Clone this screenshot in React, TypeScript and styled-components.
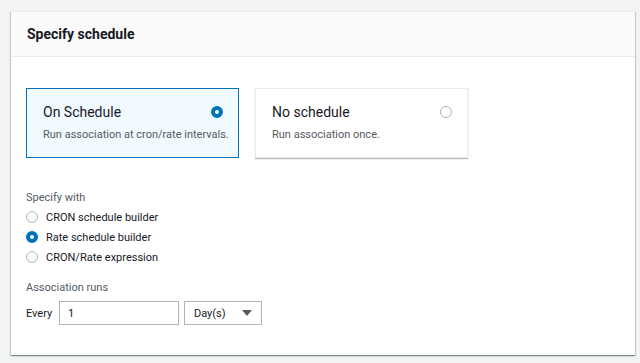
import React from "react";
import styled, { createGlobalStyle } from "styled-components";

const Global = createGlobalStyle`
  html, body { margin: 0; padding: 0; background: #f2f3f3; }
  body { font-family: Roboto, "Noto Sans", Arial, sans-serif; color: #16191f; }
  * { box-sizing: border-box; }
`;

const Page = styled.div`
  padding: 11px 5px 8px 11px;
`;

const Panel = styled.section`
  background: #ffffff;
  width: 624px;
  box-shadow: 0 1px 1px 0 rgba(0, 28, 36, 0.3), 1px 1px 1px 0 rgba(0, 28, 36, 0.15), -1px 1px 1px 0 rgba(0, 28, 36, 0.15);
  border-top: 1px solid #eaeded;
`;

const Header = styled.header`
  height: 45px;
  background: #fafafa;
  border-bottom: 1px solid #eaeded;
  display: flex;
  align-items: center;
  padding: 0 16px;
`;

const Title = styled.h2`
  margin: 0;
  font-size: 14px;
  font-weight: 700;
  color: #16191f;
`;

const Body = styled.div`
  padding: 31px 15px 30px;
`;

const Tiles = styled.div`
  display: flex;
  gap: 16px;
`;

const Tile = styled.div<{ $selected?: boolean }>`
  width: 213px;
  height: 70px;
  padding: 13px 15px 0 16px;
  border: 1px solid ${(p) => (p.$selected ? "#0073bb" : "#eaeded")};
  background: ${(p) => (p.$selected ? "#f1faff" : "#ffffff")};
  box-shadow: ${(p) => (p.$selected ? "none" : "0 1px 1px 0 rgba(0, 28, 36, 0.3)")};
`;

const TileTop = styled.div`
  display: flex;
  align-items: center;
  justify-content: space-between;
  height: 20px;
`;

const TileTitle = styled.div`
  font-size: 14px;
  color: #16191f;
`;

const TileDesc = styled.div`
  margin-top: 6px;
  font-size: 11px;
  color: #545b64;
  white-space: nowrap;
`;

const Radio = styled.span<{ $checked?: boolean }>`
  display: inline-block;
  width: 12px;
  height: 12px;
  border-radius: 50%;
  flex: none;
  border: ${(p) => (p.$checked ? "4px solid #0073bb" : "1px solid #aab7b8")};
  background: #ffffff;
`;

const FieldLabel = styled.div`
  font-size: 11px;
  color: #545b64;
  line-height: 16px;
`;

const Section = styled.div<{ $top: number }>`
  margin-top: ${(p) => p.$top}px;
`;

const Options = styled.div`
  display: flex;
  flex-direction: column;
  margin-top: 1px;
`;

const Option = styled.label`
  display: flex;
  align-items: center;
  gap: 8px;
  height: 20px;
  font-size: 11px;
  color: #16191f;
`;

const Row = styled.div`
  display: flex;
  align-items: center;
  margin-top: 5px;
  font-size: 11px;
`;

const Every = styled.span`
  width: 33px;
  color: #16191f;
`;

const Input = styled.div`
  width: 120px;
  height: 24px;
  border: 1px solid #aab7b8;
  display: flex;
  align-items: center;
  padding-left: 8px;
  font-size: 11px;
  color: #16191f;
  background: #fff;
`;

const Select = styled.div`
  margin-left: 5px;
  width: 78px;
  height: 24px;
  border: 1px solid #aab7b8;
  display: flex;
  align-items: center;
  justify-content: space-between;
  padding: 0 9px 0 9px;
  font-size: 11px;
  color: #16191f;
  background: #fff;
`;

const Caret = styled.span`
  width: 0;
  height: 0;
  border-left: 5px solid transparent;
  border-right: 5px solid transparent;
  border-top: 6px solid #545b64;
`;

export default function App() {
  return (
    <>
      <Global />
      <Page>
        <Panel>
          <Header>
            <Title>Specify schedule</Title>
          </Header>
          <Body>
            <Tiles>
              <Tile $selected>
                <TileTop>
                  <TileTitle>On Schedule</TileTitle>
                  <Radio $checked />
                </TileTop>
                <TileDesc>Run association at cron/rate intervals.</TileDesc>
              </Tile>
              <Tile>
                <TileTop>
                  <TileTitle>No schedule</TileTitle>
                  <Radio />
                </TileTop>
                <TileDesc>Run association once.</TileDesc>
              </Tile>
            </Tiles>
            <Section $top={32}>
              <FieldLabel>Specify with</FieldLabel>
              <Options>
                <Option><Radio />CRON schedule builder</Option>
                <Option><Radio $checked />Rate schedule builder</Option>
                <Option><Radio />CRON/Rate expression</Option>
              </Options>
            </Section>
            <Section $top={13}>
              <FieldLabel>Association runs</FieldLabel>
              <Row>
                <Every>Every</Every>
                <Input>1</Input>
                <Select>
                  <span>Day(s)</span>
                  <Caret />
                </Select>
              </Row>
            </Section>
          </Body>
        </Panel>
      </Page>
    </>
  );
}
